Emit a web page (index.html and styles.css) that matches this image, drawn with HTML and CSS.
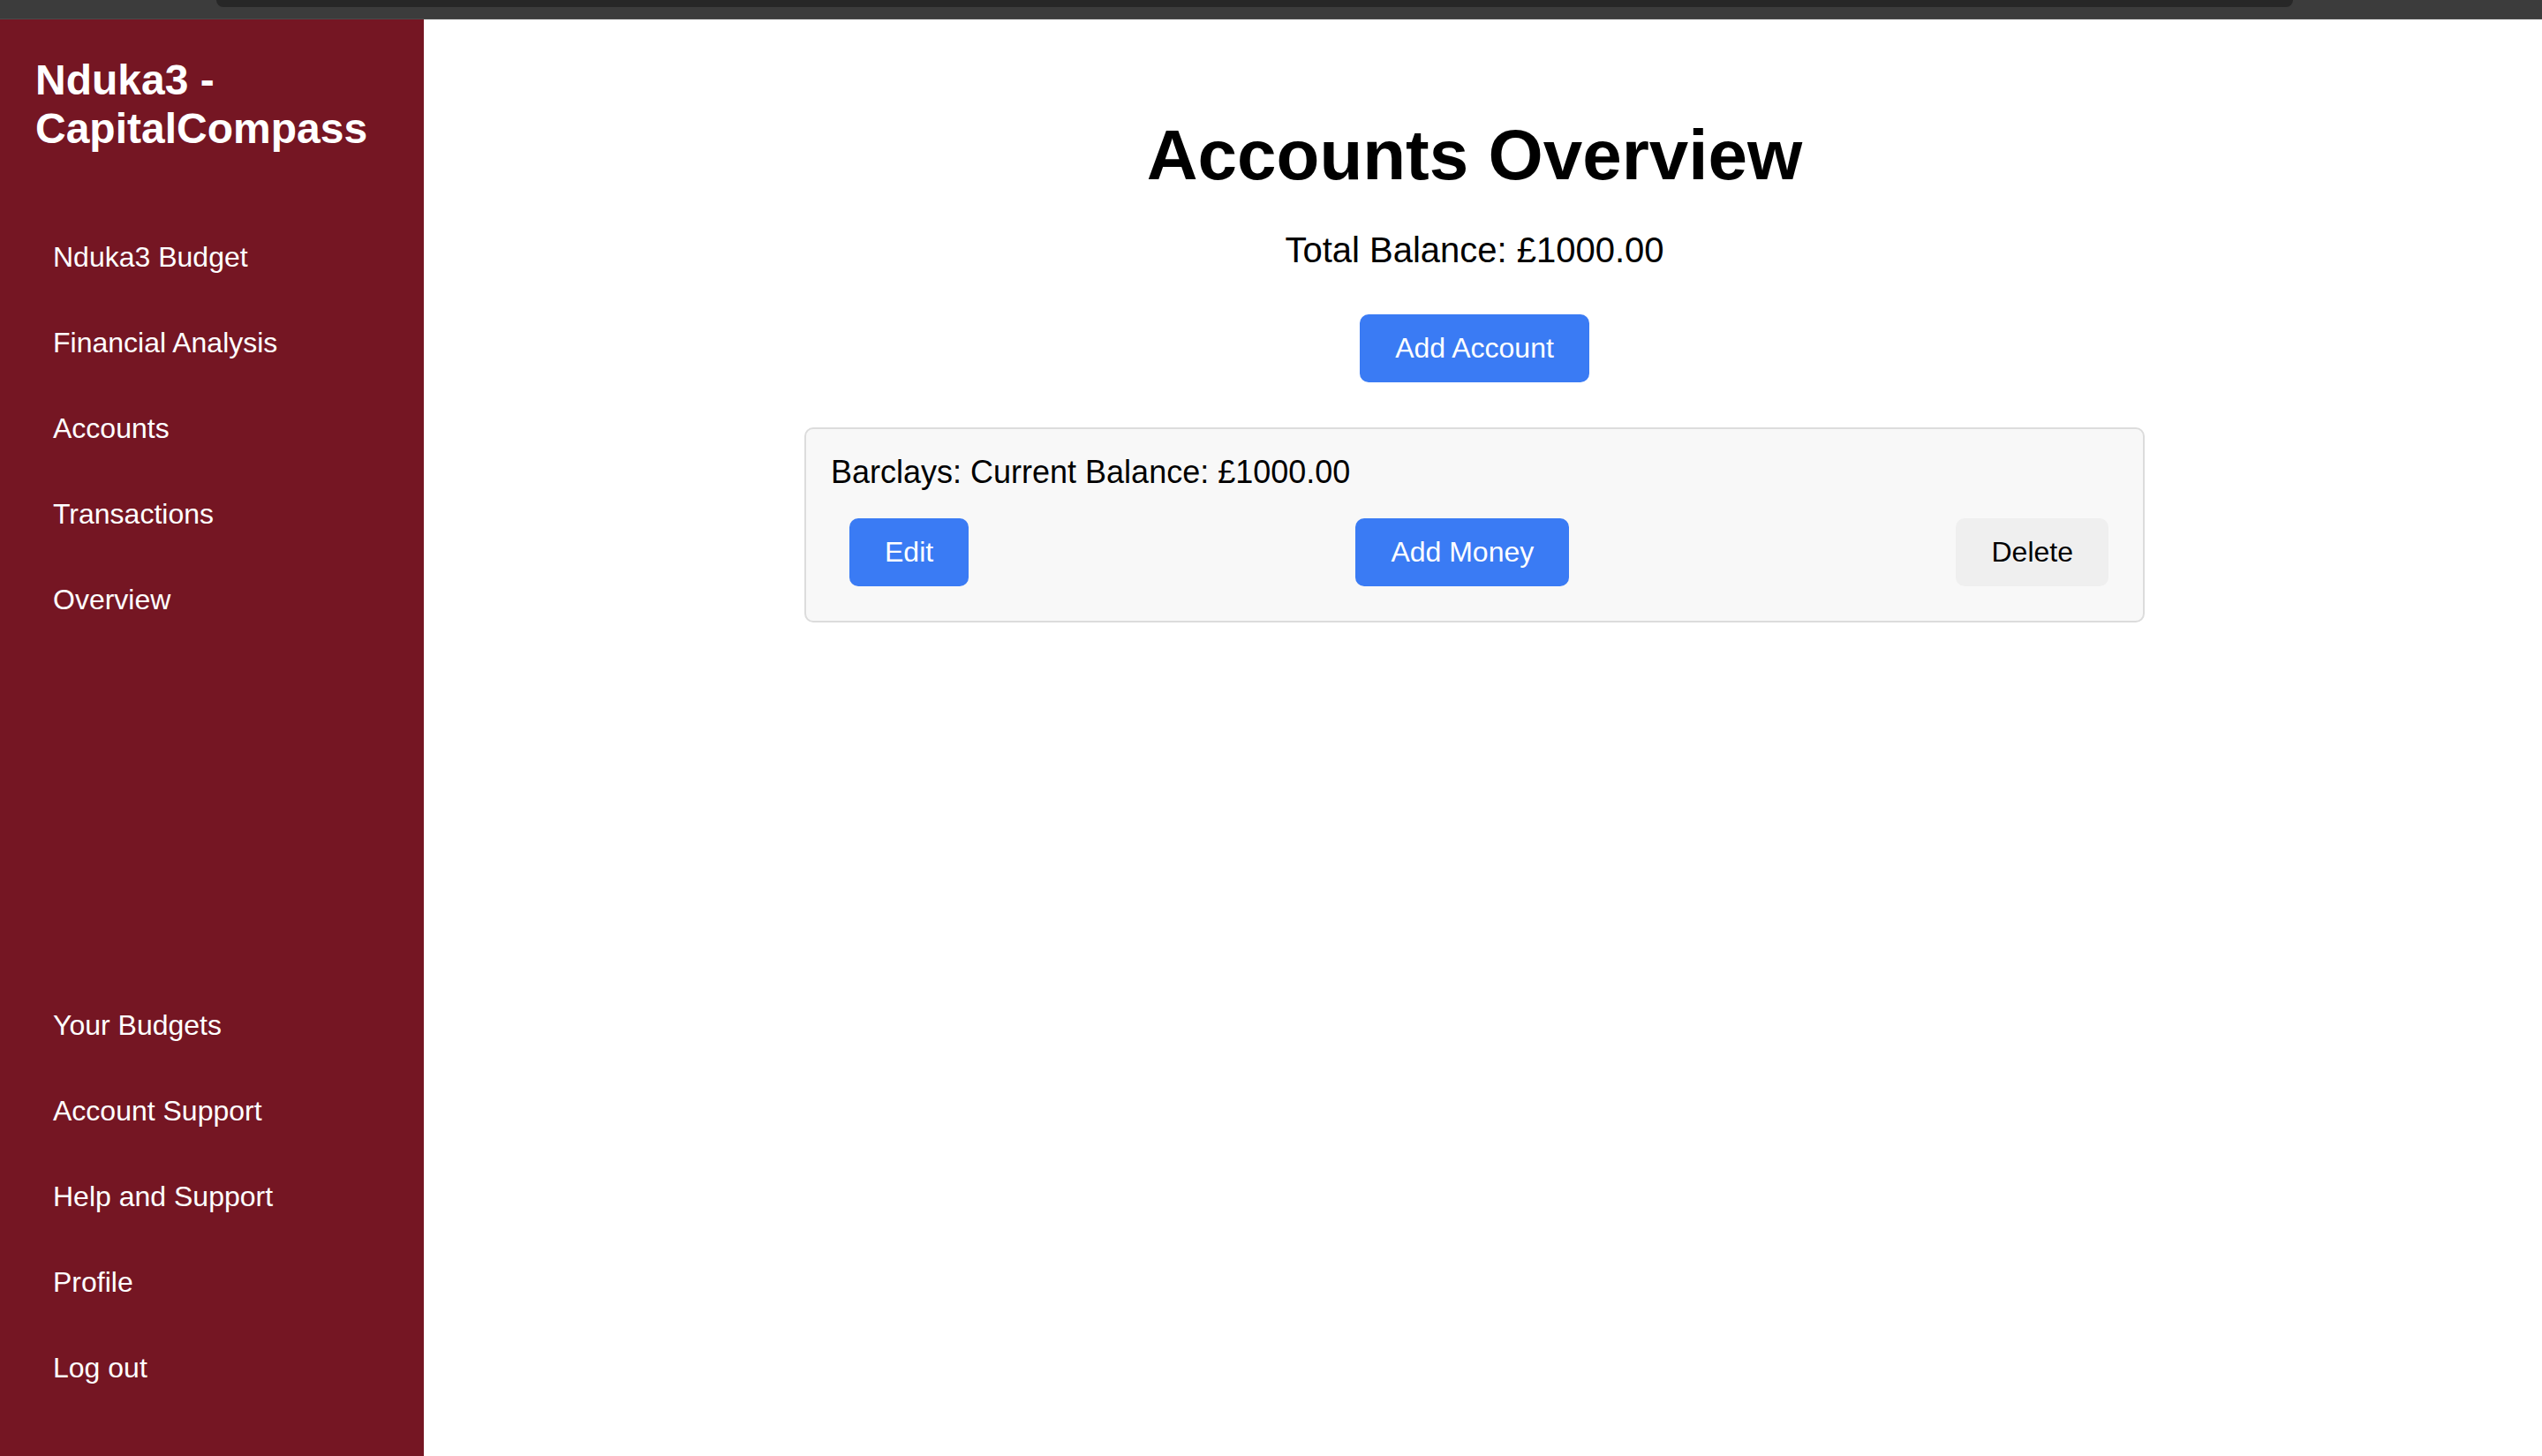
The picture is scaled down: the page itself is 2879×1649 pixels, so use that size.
FILE: index.html
```html
<!DOCTYPE html>
<html lang="en">
<head>
<meta charset="utf-8">
<title>Accounts Overview - Nduka3 CapitalCompass</title>
<link rel="stylesheet" href="styles.css">
</head>
<body>
<div class="chrome-bar"><div class="chrome-tab"></div></div>
<div class="app">
  <aside class="sidebar">
    <h2 class="brand">Nduka3 -<br>CapitalCompass</h2>
    <ul class="nav">
      <li><a href="#">Nduka3 Budget</a></li>
      <li><a href="#">Financial Analysis</a></li>
      <li><a href="#">Accounts</a></li>
      <li><a href="#">Transactions</a></li>
      <li><a href="#">Overview</a></li>
    </ul>
    <ul class="nav nav-bottom">
      <li><a href="#">Your Budgets</a></li>
      <li><a href="#">Account Support</a></li>
      <li><a href="#">Help and Support</a></li>
      <li><a href="#">Profile</a></li>
      <li><a href="#">Log out</a></li>
    </ul>
  </aside>
  <main class="main">
    <h1 class="page-title">Accounts Overview</h1>
    <p class="total">Total Balance: £1000.00</p>
    <button class="btn btn-primary">Add Account</button>
    <section class="account-card">
      <p class="account-line">Barclays: Current Balance: £1000.00</p>
      <div class="account-actions">
        <button class="btn btn-primary">Edit</button>
        <button class="btn btn-primary">Add Money</button>
        <button class="btn btn-plain">Delete</button>
      </div>
    </section>
  </main>
</div>
</body>
</html>
```
FILE: styles.css
```css
* { box-sizing: border-box; }

html, body {
  margin: 0;
  padding: 0;
  height: 100%;
}

body {
  font-family: "Liberation Sans", Arial, Helvetica, sans-serif;
  color: #000;
  background: #fff;
  display: flex;
  flex-direction: column;
  overflow: hidden;
}

.chrome-bar {
  height: 22px;
  flex: 0 0 22px;
  background: #3c3c3c;
  border-bottom: 1px solid #4a4a4a;
  padding-left: 245px;
  padding-right: 282px;
}

.chrome-tab {
  height: 8px;
  background: #272727;
  border-radius: 0 0 10px 10px;
}

.app {
  flex: 1;
  display: flex;
  min-height: 0;
}

.sidebar {
  width: 480px;
  flex: 0 0 480px;
  background: #751623;
  color: #fff;
  display: flex;
  flex-direction: column;
  padding: 41px 0 51px 40px;
}

.brand {
  margin: 0 0 70px;
  font-size: 48px;
  line-height: 55px;
  font-weight: bold;
  color: #fff;
}

.nav {
  list-style: none;
  margin: 0;
  padding: 0;
}

.nav a {
  display: block;
  color: #fff;
  text-decoration: none;
  font-size: 32px;
  line-height: 37px;
  padding: 30px 20px;
}

.nav-bottom {
  margin-top: auto;
}

.main {
  flex: 1;
  display: flex;
  flex-direction: column;
  align-items: center;
  padding: 108px 39px 0 20px;
}

.page-title {
  margin: 0;
  font-size: 80px;
  line-height: 92px;
  font-weight: bold;
}

.total {
  margin: 38px 0 0;
  font-size: 40px;
  line-height: 46px;
}

.btn {
  font-family: "Liberation Sans", Arial, Helvetica, sans-serif;
  font-size: 32px;
  line-height: 37px;
  padding: 20px 40px;
  border: none;
  border-radius: 10px;
  cursor: pointer;
}

.btn-primary {
  background: #3a7bf4;
  color: #fff;
}

.btn-plain {
  background: #efefef;
  color: #000;
}

.main > .btn {
  margin-top: 50px;
}

.account-card {
  margin-top: 51px;
  width: 1518px;
  background: #f8f8f8;
  border: 2px solid #dcdcdc;
  border-radius: 10px;
  padding: 28px 28px 39px 28px;
}

.account-line {
  margin: 0;
  font-size: 36px;
  line-height: 41px;
}

.account-actions {
  margin: 32px 11px 0 21px;
  display: flex;
  justify-content: space-between;
  align-items: center;
}
```
